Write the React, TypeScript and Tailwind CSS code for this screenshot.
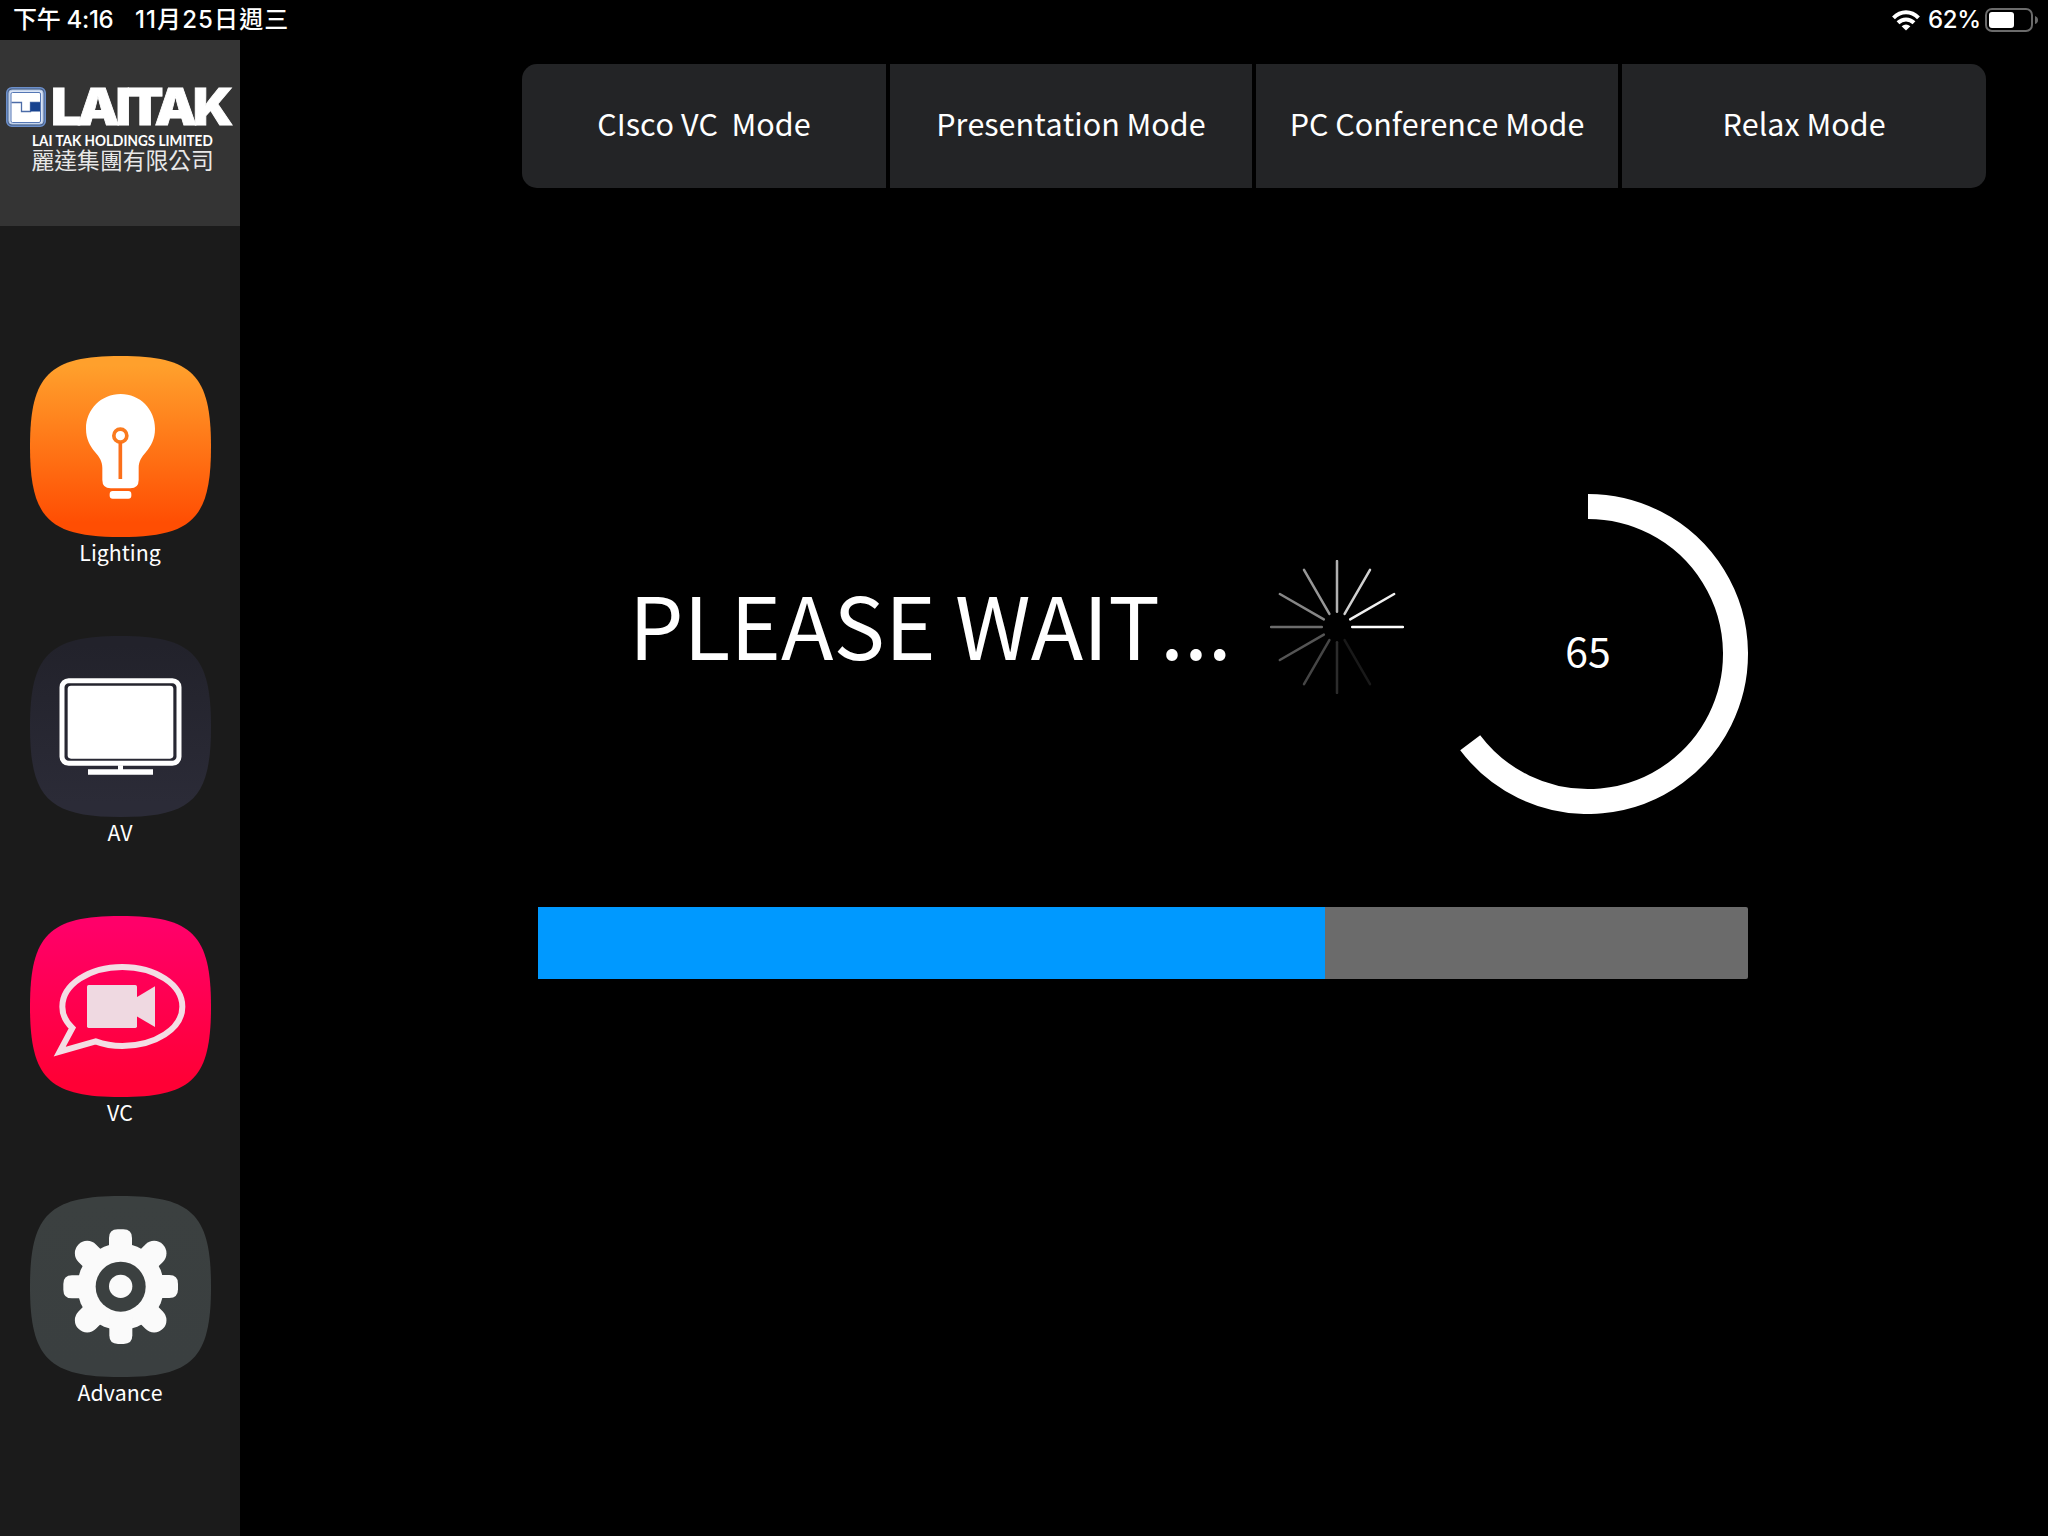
import React from "react";

const SQUIRCLE =
  "M90 320C90 105 147 48 362 48C577 48 633 105 633 320C633 535 577 591 362 591C147 591 90 535 90 320Z";

function Tile({ id, from, to, children }: { id: string; from: string; to: string; children: React.ReactNode }) {
  return (
    <svg viewBox="90 48 543 543" className="block h-[181px] w-[181px]">
      <defs>
        <linearGradient id={id} x1="0" y1="0" x2="0" y2="1">
          <stop offset="0.05" stopColor={from} />
          <stop offset="0.92" stopColor={to} />
        </linearGradient>
      </defs>
      <path d={SQUIRCLE} fill={`url(#${id})`} />
      {children}
    </svg>
  );
}

function BulbIcon() {
  return (
    <Tile id="lighting" from="#ffa02c" to="#ff4e03">
      <path
        d="M362 162C304 162 258 208 258 266C258 297 270 318 285 336C299 352 307 364 307 384V420Q307 445 332 445H391Q416 445 416 420V384C416 364 424 352 438 336C453 318 465 297 465 266C465 208 420 162 362 162Z"
        fill="#fff"
      />
      <rect x="329" y="453" width="65" height="23" rx="9" fill="#fff" />
      <circle cx="361" cy="287" r="19.500" fill="none" stroke="#fa7a1e" strokeWidth="11" />
      <path d="M361 306V417" stroke="#fb6f1a" strokeWidth="11" />
    </Tile>
  );
}

function TvIcon() {
  return (
    <Tile id="av" from="#22222b" to="#2b2b37">
      <rect x="186" y="182" width="351" height="248" rx="20" fill="none" stroke="#fff" strokeWidth="15" />
      <rect x="203" y="197" width="317" height="219" rx="10" fill="#fff" />
      <path d="M354 436H369V448H459V464H264V448H354Z" fill="#fff" />
    </Tile>
  );
}

function VideoChatIcon() {
  return (
    <Tile id="vc" from="#ff0069" to="#ff0035">
      <path
        d="M217 384C199 367 187 345 187 320C187 254 268 201 367 201C466 201 547 254 547 320C547 386 466 438 367 438C338 438 311 433 287 424L179 455Z"
        fill="none"
        stroke="#f3dde4"
        strokeWidth="18"
        strokeMiterlimit="10"
      />
      <rect x="261" y="255" width="150" height="129" rx="5" fill="#efd9e1" />
      <path d="M410 292L465 259V381L410 349Z" fill="#efd9e1" />
    </Tile>
  );
}

const TEETH = [0, 90, 180, 270];

function GearIcon() {
  return (
    <Tile id="advance" from="#3b4040" to="#3a3f40">
      <g fill="#fafafa">
        <circle cx="362" cy="320" r="130" />
        {TEETH.map((a) => (
          <g key={a} transform={`rotate(${a} 362 320)`}>
            <path d="M327 230V174Q327 148 353 148H370Q396 148 396 174V230Z" />
            <path d="M325 240V178A37 37 0 0 1 399 178V240Z" transform="rotate(45 362 320)" />
          </g>
        ))}
      </g>
      <circle cx="362" cy="320" r="75" fill="#3b4040" />
      <circle cx="362" cy="319" r="35" fill="#fafafa" />
    </Tile>
  );
}

const NAV = [
  { label: "Lighting", Icon: BulbIcon },
  { label: "AV", Icon: TvIcon },
  { label: "VC", Icon: VideoChatIcon },
  { label: "Advance", Icon: GearIcon },
];

const MODES = ["CIsco VC  Mode", "Presentation Mode", "PC Conference Mode", "Relax Mode"];

function StatusBar() {
  return (
    <header className="flex h-10 items-center justify-between bg-black pl-[13px] pr-[10px] font-['Inter','Noto_Sans_CJK_TC',sans-serif] text-[24px] font-medium leading-10 text-white">
      <div className="flex whitespace-pre">
        <span className="w-[122px] tracking-[-0.3px]">下午 4:16</span>
        <span className="tracking-[1.1px]">11月25日週三</span>
      </div>
      <div className="flex items-center">
        <svg viewBox="0 0 28 21" className="mr-[8px] h-[21px] w-[28px]">
          <g fill="none" stroke="#fff" strokeWidth="4">
            <path d="M1.500 7.800Q7 2.200 14 2.200T26.500 7.800" />
            <path d="M6 12.800Q9.500 9.400 14 9.400T22 12.800" />
          </g>
          <path d="M9.600 16.200Q14 12.600 18.400 16.200L14 20.600Z" fill="#fff" />
        </svg>
        <span className="w-[57px] tracking-[-0.3px]">62%</span>
        <svg viewBox="0 0 53 24" className="h-[24px] w-[53px]">
          <rect x="1" y="1" width="46" height="22" rx="6" fill="none" stroke="#6b6b6b" strokeWidth="2" />
          <rect x="4" y="4" width="25" height="16" rx="3" fill="#fff" />
          <path d="M50 8Q53 9 53 12T50 16Z" fill="#6b6b6b" />
        </svg>
      </div>
    </header>
  );
}

function Logo() {
  return (
    <div className="flex h-[186px] flex-col bg-[#343434] pl-[6px] pt-[47px] text-white [font-kerning:normal]">
      <div className="flex h-10 items-center">
        <svg viewBox="0 0 40 40" className="h-10 w-10 shrink-0">
          <rect x="0.800" y="0.800" width="38.400" height="38.400" rx="5" fill="#41587f" stroke="#6c8fca" strokeWidth="1.600" />
          <rect x="3" y="3" width="34" height="34" rx="3.500" fill="#dbe5f5" stroke="#b4c7e6" strokeWidth="1.200" />
          <rect x="5" y="5.500" width="29.500" height="30" rx="1.500" fill="#fff" stroke="#5577b5" strokeWidth="1" />
          <path d="M5.500 15.500H15.500V24.500H24.500V15.500H34" fill="none" stroke="#4c6ca8" strokeWidth="1.300" />
          <rect x="24.500" y="15.500" width="9.500" height="9" fill="#17428f" />
        </svg>
        <span className="ml-[5px] origin-left scale-x-[1.05] whitespace-nowrap font-['Inter',sans-serif] text-[51px] font-black leading-10 tracking-[-4px] [-webkit-text-stroke:0.8px_white]">
          LAITAK
        </span>
      </div>
      <div className="ml-[26px] mt-[5px] h-[16px] w-max origin-left scale-x-[0.905] whitespace-nowrap font-['Lato',sans-serif] text-[15px] font-bold leading-[16px]">
        LAI TAK HOLDINGS LIMITED
      </div>
      <div className="ml-[25.5px] h-[24px] whitespace-nowrap font-['Noto_Sans_CJK_TC',sans-serif] text-[22.8px] leading-[24px] text-[#e8e8e8]">
        麗達集團有限公司
      </div>
    </div>
  );
}

const RAYS = ["#fff", "#f0f0f0", "#d0d0d0", "#b0b0b0", "#979797", "#868686", "#6c6c6c", "#555", "#454545", "#2c2c2c", "#191919"];

function Spinner() {
  return (
    <svg viewBox="-67 -67 134 134" className="h-[134px] w-[134px]">
      {RAYS.map((c, i) => (
        <path key={c} d="M15.200 0H66" stroke={c} strokeWidth="2.500" strokeLinecap="round" transform={`rotate(${-30 * i})`} />
      ))}
    </svg>
  );
}

function Ring({ value }: { value: number }) {
  return (
    <div className="grid h-[320px] w-[320px] place-items-center">
      <svg viewBox="-160 -160 320 320" className="col-start-1 row-start-1 h-[320px] w-[320px]">
        <path d="M0 -147.500A147.500 147.500 0 1 1 -117.800 88.770" fill="none" stroke="#fff" strokeWidth="25" />
      </svg>
      <span className="col-start-1 row-start-1 pb-[10px] text-[41px] leading-none">{value}</span>
    </div>
  );
}

export default function App() {
  const progress = 65;
  return (
    <div className="flex h-[1536px] w-[2048px] flex-col overflow-hidden bg-black font-['Noto_Sans_CJK_TC',sans-serif] text-white [font-kerning:none]">
      <StatusBar />
      <div className="flex flex-1">
        <aside className="flex w-[240px] flex-col bg-[#1b1b1b]">
          <Logo />
          <nav className="flex flex-col pt-[130px]">
            {NAV.map(({ label, Icon }) => (
              <button key={label} className="flex h-[280px] flex-col items-center">
                <Icon />
                <span className="text-[21.33px] leading-[30px]">{label}</span>
              </button>
            ))}
          </nav>
        </aside>
        <main className="flex flex-1 flex-col">
          <div className="ml-[282px] mt-[24px] flex h-[124px] w-[1464px] overflow-hidden rounded-[15px]">
            {MODES.map((m) => (
              <button
                key={m}
                className="flex w-[366px] shrink-0 items-center justify-center whitespace-pre border-x-2 border-black bg-[#232426] pb-[4px] text-[30.5px] first:border-l-0 last:border-r-0"
              >
                {m}
              </button>
            ))}
          </div>
          <div className="ml-[389px] mt-[306px] flex h-[320px]">
            <div className="mt-[69px] w-[641px] whitespace-nowrap text-[86.2px] leading-[120px]">PLEASE WAIT...</div>
            <div className="mt-[66px] w-[158px]">
              <Spinner />
            </div>
            <Ring value={progress} />
          </div>
          <div className="ml-[298px] mt-[93px] h-[72px] w-[1210px] rounded-[2px] bg-[#6b6b6b]">
            <div className="h-full bg-[#0099ff]" style={{ width: `${progress}%` }} />
          </div>
        </main>
      </div>
    </div>
  );
}
